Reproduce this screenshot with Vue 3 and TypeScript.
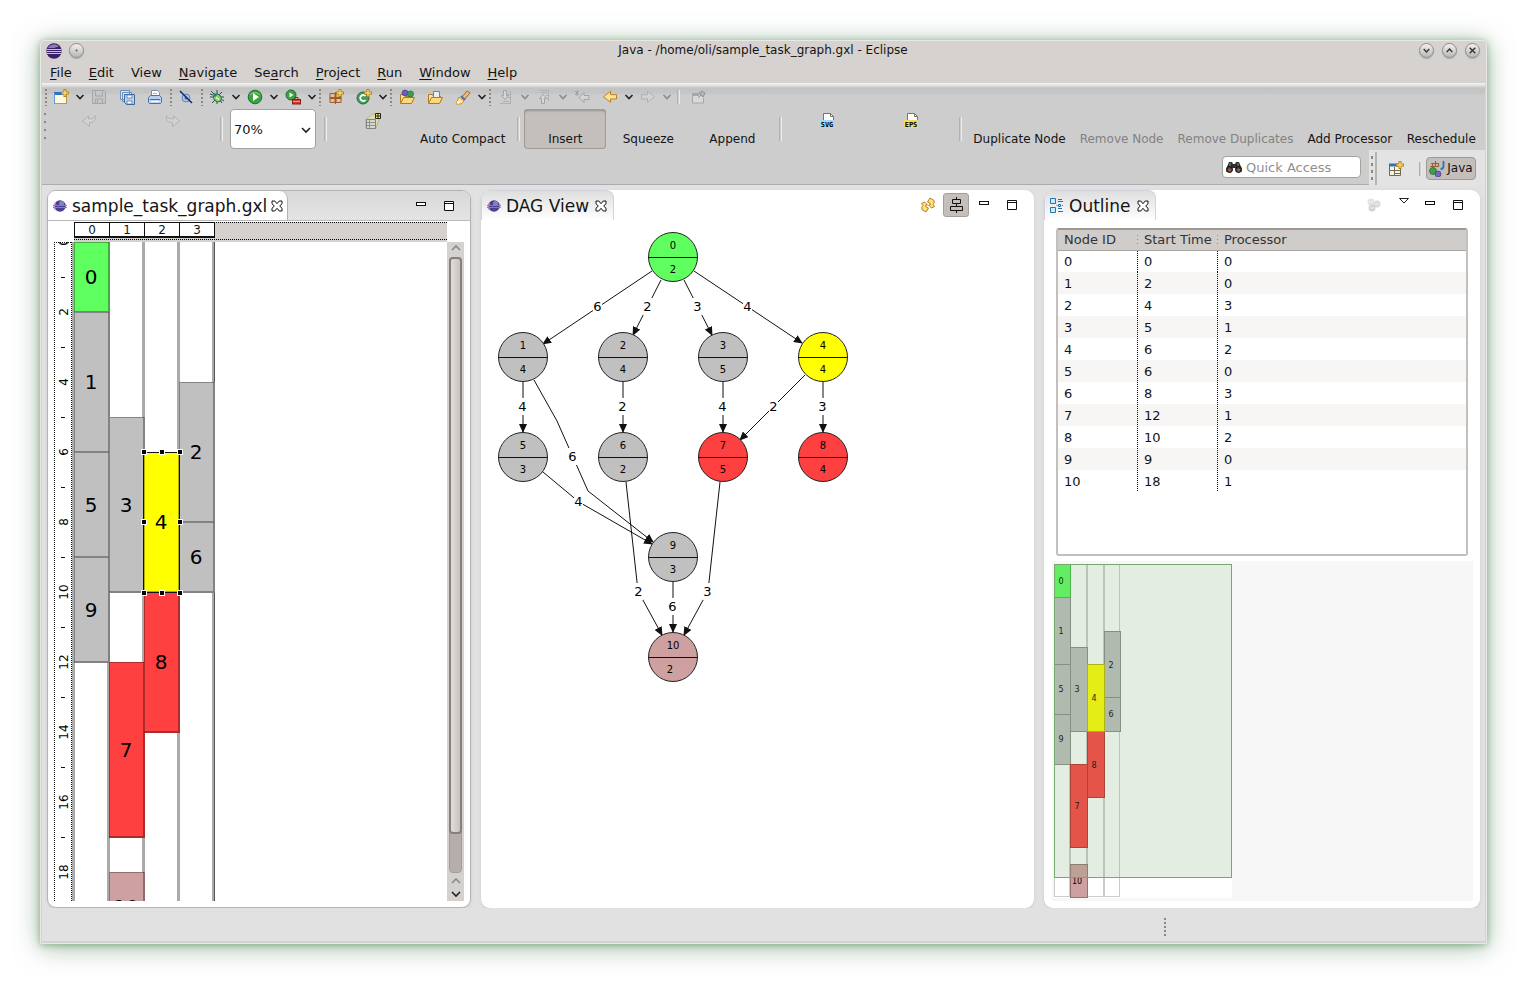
<script setup lang="ts">
import { ref } from 'vue'

interface Tool { kind: 'icon' | 'drop' | 'grip' | 'sep'; icon?: string; label?: string; wide?: boolean; off?: boolean }
interface Action { kind: 'button' | 'sep' | 'zoom'; label?: string; icon?: string; off?: boolean; on?: boolean; size?: 'snug' | 'roomy' }
interface Task { id: number; lane: number; start: number; len: number; fill: string }
interface GraphNode { id: number; x: number; y: number; w: number; fill: string }
interface Edge { points: string; x: number; y: number; cost: number }

const zoomLevel = ref('70%')
const search = ref('')
const selected = 4

const menus: [string, string, string][] = [
  ['', 'F', 'ile'], ['', 'E', 'dit'], ['View', '', ''], ['', 'N', 'avigate'], ['Se', 'a', 'rch'],
  ['', 'P', 'roject'], ['', 'R', 'un'], ['', 'W', 'indow'], ['', 'H', 'elp'],
]

const page = '<path d="M3.500 .500h7l3 3v11h-10z" fill="#fff" stroke="#77756a"/><path d="M10.500 .500v3h3" fill="none" stroke="#77756a"/>'
const spark = '<path d="M12 0v8M8 4h8" stroke="#b8860b" stroke-width="3"/><path d="M12 1v6M9 4h6" stroke="#fff3a8" stroke-width="1"/>'
const folder = '<path d="M1.500 13.500v-8h4l1 2h7v2" fill="#fbe3a0" stroke="#b07a1e"/><path d="M1.500 14.500l3-6h11l-3 6z" fill="#ffd778" stroke="#b07a1e"/>'
const icons: Record<string, string> = {
  new: '<rect x="1.500" y="3.500" width="12" height="11" fill="#fff8df" stroke="#b39a55"/><path d="M1 4.500h9" stroke="#2f73c0" stroke-width="3"/><path d="M1.500 4v10" stroke="#5f9bd4"/>' + spark,
  save: '<path d="M1.500 1.500h12l1 1v12h-13z" fill="#c6c6c6" stroke="#a6a6a6"/><path d="M4.500 2v5h7V2M4.500 14v-4h7v4M6.500 11v3" fill="none" stroke="#a6a6a6"/>',
  saveall: '<path d="M1.500 1.500h9v9h-9zM3.500 3.500h9v9h-9z" fill="#d9e6f4" stroke="#6b8fb8"/><path d="M5.500 5.500h10v10h-8l-2-2z" fill="#bcd2ea" stroke="#3d6a9e"/><path d="M8 6h5v3H8zM8 12h5v3H8z" fill="#fff" stroke="#3d6a9e" stroke-width=".7"/>',
  print: '<path d="M4.500 8V1.500h6l2 2V8" fill="#fff" stroke="#6d93c0"/><path d="M6 4.500h4M6 6.500h5" stroke="#9bb6d8"/><path d="M1.500 8.500l2-2h9l2 2v5l-1 1h-11l-1-1z" fill="#b9cfec" stroke="#4672ad"/><path d="M3 10.500h10" stroke="#4672ad"/><path d="M4 12.500h8" stroke="#fff"/>',
  skip: '<circle cx="8" cy="9" r="4" fill="#aac8e4" stroke="#5b87b3"/><circle cx="8" cy="9" r="1.500" fill="#476f9b"/><path d="M2 2l12 12" stroke="#14257c" stroke-width="1.500"/>',
  bug: '<path d="M2 2l4 4M8 1v4M13 3l-3 3M1 8h4M15 8h-4M3 14l3-3M8 15v-3M13 14l-2-3M1 5l3 1M15 12l-3-2" stroke="#27534a"/><ellipse cx="8.500" cy="9" rx="4" ry="3.500" transform="rotate(40 8.500 9)" fill="#8fce6a" stroke="#1f6a56"/><circle cx="6" cy="6" r="1.800" fill="#2b7d6c"/><path d="M7 8l3 3" stroke="#dff5b0" stroke-width="1.500"/>',
  run: '<circle cx="8" cy="8" r="6.800" fill="#3da13c" stroke="#17703a"/><path d="M3 6a6 5 0 0 1 10 0" fill="none" stroke="#96d08a"/><path d="M6 4l6 4-6 4z" fill="#fff"/>',
  ext: '<circle cx="6" cy="6" r="5" fill="#3da13c" stroke="#17703a"/><path d="M4.500 3.500l4 2.500-4 2.500z" fill="#fff"/><rect x="7.500" y="10.500" width="8" height="4.500" fill="#d23b2b" stroke="#8c1c14"/><path d="M10 10V8.500h3V10" fill="none" stroke="#8c1c14"/><path d="M8 12.500h7" stroke="#f4b5a8" stroke-width=".8"/>',
  pkg: '<path d="M2 4.500h5v4H2zM8 4.500h5v4H8zM2 9.500h5v4H2zM8 9.500h5v4H8z" fill="#e9bf95" stroke="#9a5a32"/><path d="M7.500 3v12M1 9h13" stroke="#9a5a32"/>' + spark,
  cls: '<circle cx="7" cy="9" r="6" fill="#3f9e5b" stroke="#1c7040"/><path d="M9.500 7a3 3 0 1 0 0 4" fill="none" stroke="#fff" stroke-width="1.800"/>' + spark,
  openA: folder + '<circle cx="6" cy="4" r="3" fill="#6a5fb5" stroke="#463c8e" stroke-width=".7"/><circle cx="11.500" cy="5" r="3" fill="#3e9c57" stroke="#1c7040" stroke-width=".7"/>',
  openB: folder + '<path d="M6.500 2.500h6v6h-6z" fill="#e6eefa" stroke="#5f84b5"/>',
  wand: '<path d="M7 8l5-6 3 2-5 6z" fill="#f3b577" stroke="#a5682a"/><path d="M4 8l5 4-3 3H1z" fill="#ffe89a" stroke="#c79328"/><path d="M6 7l4 4" stroke="#5a6fae" stroke-width="2"/><path d="M2 13l2 1" stroke="#fff" stroke-width="2"/>',
  nextA: '<path d="M5.500 1.500h3v5h2l-3.500 4-3.500-4h2z" fill="#d6d6d6" stroke="#a3a3a3"/><path d="M2 14.500h11M12.500 2v12M9 5.500h3M10 8.500h2M5 12.500h6" stroke="#b1b1b1"/>',
  prevA: '<path d="M5.500 14.500h3v-5h2L7 5.500l-3.500 4h2z" fill="#d6d6d6" stroke="#a3a3a3"/><path d="M4 1.500h9M12.500 2v10M5 3.500h6M10 6.500h2M11 9.500h2" stroke="#b1b1b1"/>',
  lastEdit: '<path d="M1 2l4 4M5 2L1 6M3 1v6" stroke="#9d9d9d"/><path d="M15 6.500h-5v-3l-5 5 5 5v-3h5z" fill="#d4d4d4" stroke="#a3a3a3"/>',
  back: '<path d="M14.500 5.500h-6v-4l-7 6.500 7 6.500v-4h6z" fill="#ffe29a" stroke="#b57c17" transform="translate(0 1) scale(1 .85)"/>',
  fwd: '<path d="M1.500 5.500h6v-4l7 6.500-7 6.500v-4h-6z" fill="#d2d2d2" stroke="#acacac" transform="translate(0 1) scale(1 .85)"/>',
  pin: '<path d="M2.500 4.500h7M2.500 4v10h11V9" fill="#d8d8d8" stroke="#a6a6a6"/><path d="M3 5h6v2H3z" fill="#a8a8a8"/><path d="M8 9l3-3M9 4l4 4 2-4-3-2z" fill="#b4b4b4" stroke="#929292"/>',
  undo: '<path d="M14.500 2.500c1 5-2 7-6 7v4l-7-5.500 6-5v3c4 0 6-1 7-3.500z" fill="#d2d2ce" stroke="#b3b3b0"/>',
  redo: '<path d="M1.500 2.500c-1 5 2 7 6 7v4l7-5.500-6-5v3c-4 0-6-1-7-3.500z" fill="#d2d2ce" stroke="#b3b3b0"/>',
  compact: '<path d="M1 6l7-5h8l-5 14H1z" fill="#dedeae" stroke="#a5a58d" stroke-width=".7"/><path d="M1.500 6.500h9v9h-9z" fill="#d5d5d0" stroke="#84847c"/><path d="M1 9.500h10M4.500 7v8M1 12.500h10" stroke="#84847c" stroke-width=".8"/><path d="M10.500 .500h5v5h-5z" fill="#fff15a" stroke="#222"/><path d="M10.500 3h5M13 1v4" stroke="#222"/>',
  svg: page + '<rect x="0" y="7" width="14" height="8" fill="#9fdcfa"/><text x="7" y="14" font-size="7" font-weight="700" text-anchor="middle" font-family="DejaVu Sans Mono">SVG</text>',
  eps: page + '<rect x="0" y="7" width="14" height="8" fill="#ffd65c"/><text x="7" y="14" font-size="7" font-weight="700" text-anchor="middle" font-family="DejaVu Sans Mono">EPS</text>',
  persp: '<path d="M1.500 3.500h11v11h-11z" fill="#f7f3e2" stroke="#6f6a52"/><path d="M1 4h10" stroke="#2f6fc0" stroke-width="3"/><path d="M1 9.500h12M6.500 6v9M6 12.500h7" stroke="#6f6a52"/>' + spark,
  java: '<path d="M2 2.500h8M1 5.500h9M3.500 2v5M6.500 0v6M9.500 2v4" stroke="#9c5c34" stroke-width="1.200"/><circle cx="4" cy="10" r="3.500" fill="#3f9e4b" stroke="#1c7040" stroke-width=".7"/><circle cx="9" cy="13" r="3" fill="#7467bd" stroke="#463c8e" stroke-width=".7"/><path d="M14.500 0v5q0 3-3 3" fill="none" stroke="#2b75b8" stroke-width="1.800"/>',
  binoc: '<path d="M3 3h3l1 2h2l1-2h3l2.500 6v4h-5l-1-4h-3l-1 4h-5V9z" fill="#2f2f2f"/><circle cx="3.500" cy="10.500" r="3" fill="#3b3b3b" stroke="#111"/><circle cx="12.500" cy="10.500" r="3" fill="#3b3b3b" stroke="#111"/><circle cx="3.700" cy="11" r="1.500" fill="#b5602e"/><circle cx="12.700" cy="11" r="1.500" fill="#b5602e"/><path d="M4 4v3M12 4v3" stroke="#8b8b8b"/>',
  eclipse: '<circle cx="8" cy="8" r="7.700" fill="#3b2268"/><path d="M2 5a6.500 6 0 0 1 11-1.500L8 5z" fill="#8f7ab8"/><path d="M1 6.500h14M.5 8.500h15M1 10.500h14" stroke="#c9bde2"/>',
  ball: '<circle cx="8" cy="8" r="5.800" fill="#4b3f92"/><path d="M3.500 5a6 6 0 0 0 0 7" fill="none" stroke="#c78fc8" stroke-width="1.500"/><circle cx="9.500" cy="5.500" r="2.500" fill="#8582c4"/><path d="M1 7.500h14M1 9.500h14" stroke="#6f86d8"/>',
  sync: '<path d="M1.500 6.500L4.500 5l3 3-2 .500q.5 2.500 3 2.500l-2.500 4-4-2.500Q1 10 3 8.500z" fill="#ffdf80" stroke="#b5811c"/><path d="M14.500 9.500L11.500 11l-3-3 2-.5Q10 5 7.500 5L10 1l4 2.500Q15 6 13 7.500z" fill="#ffdf80" stroke="#b5811c"/>',
  align: '<path d="M8.500 0v3M8.500 6v4M8.500 13v3" stroke="#111"/><path d="M4.500 2.500h8v4h-8zM2.500 9.500h12v4h-12z" fill="none" stroke="#111"/>',
  outline: '<path d="M1.500 .500h5v5h-5zM1.500 9.500h5v5h-5z" fill="#cfe9fa" stroke="#1d75b3"/><path d="M9 1.500h4M9 3.500h5M9 10.500h4M9 13.500h5M7.500 7.500h1M13 7.500h1" stroke="#1d75b3"/><path d="M9.500 6.500h2v2h-2z" fill="#cfe9fa" stroke="#1d75b3"/>',
  group: '<circle cx="5" cy="5" r="3.500" fill="#e2e2e2"/><circle cx="11" cy="7" r="3.500" fill="#dadada"/><circle cx="6" cy="11" r="3.500" fill="#d2d2d2"/><path d="M3 5h4M9 7h4M4 11h4" stroke="#f2f2f2"/>',
  close: '<path d="M3 3h2.800L8 5.700 10.200 3H13v2.800L10.700 8 13 10.200V13h-2.800L8 10.300 5.800 13H3v-2.800L5.300 8 3 5.800z" fill="#fff" stroke="#111"/>',
  min: '<rect x="3.500" y="4.500" width="9" height="3" fill="#fff" stroke="#111"/>',
  max: '<path d="M3.500 3.500h9v9h-9zM3 5.500h10" fill="#fff" stroke="#111"/>',
  view: '<path d="M3.500 1.500h9L8 6z" fill="#fff" stroke="#222"/>',
}

const tools: Tool[] = [
  { kind: 'grip' },
  { kind: 'icon', icon: 'new', label: 'New' }, { kind: 'drop' },
  { kind: 'icon', icon: 'save', label: 'Save', off: true },
  { kind: 'icon', icon: 'saveall', label: 'Save All' },
  { kind: 'icon', icon: 'print', label: 'Print' },
  { kind: 'grip' },
  { kind: 'icon', icon: 'skip', label: 'Skip Breakpoints' },
  { kind: 'grip' },
  { kind: 'icon', icon: 'bug', label: 'Debug' }, { kind: 'drop' },
  { kind: 'icon', icon: 'run', label: 'Run' }, { kind: 'drop' },
  { kind: 'icon', icon: 'ext', label: 'External Tools' }, { kind: 'drop' },
  { kind: 'grip', wide: true },
  { kind: 'icon', icon: 'pkg', label: 'New Package' },
  { kind: 'icon', icon: 'cls', label: 'New Class' }, { kind: 'drop' },
  { kind: 'grip', wide: true },
  { kind: 'icon', icon: 'openA', label: 'Open Type' },
  { kind: 'icon', icon: 'openB', label: 'Open Task' },
  { kind: 'icon', icon: 'wand', label: 'Search' }, { kind: 'drop' },
  { kind: 'grip', wide: true },
  { kind: 'icon', icon: 'nextA', label: 'Next Annotation', off: true }, { kind: 'drop', off: true },
  { kind: 'icon', icon: 'prevA', label: 'Previous Annotation', off: true }, { kind: 'drop', off: true },
  { kind: 'icon', icon: 'lastEdit', label: 'Last Edit Location', off: true },
  { kind: 'icon', icon: 'back', label: 'Back' }, { kind: 'drop' },
  { kind: 'icon', icon: 'fwd', label: 'Forward', off: true }, { kind: 'drop', off: true },
  { kind: 'sep' },
  { kind: 'icon', icon: 'pin', label: 'Pin Editor', off: true },
]

const actions: Action[] = [
  { kind: 'button', icon: 'undo', off: true }, { kind: 'button', icon: 'redo', off: true },
  { kind: 'sep' }, { kind: 'zoom' }, { kind: 'sep' },
  { kind: 'button', icon: 'compact' }, { kind: 'button', label: 'Auto Compact', size: 'snug' },
  { kind: 'sep' },
  { kind: 'button', label: 'Insert', on: true }, { kind: 'button', label: 'Squeeze' }, { kind: 'button', label: 'Append' },
  { kind: 'sep' },
  { kind: 'button', icon: 'svg' }, { kind: 'button', icon: 'eps' },
  { kind: 'sep' },
  { kind: 'button', label: 'Duplicate Node', size: 'roomy' },
  { kind: 'button', label: 'Remove Node', off: true, size: 'roomy' },
  { kind: 'button', label: 'Remove Duplicates', off: true, size: 'roomy' },
  { kind: 'button', label: 'Add Processor', size: 'roomy' },
  { kind: 'button', label: 'Reschedule', size: 'roomy' },
]

const gray = '#c0c0c0', green = '#60ff60', yellow = '#ffff00', red = '#ff4040', rose = '#cfa0a0'

const tasks: Task[] = [
  { id: 0, lane: 0, start: 0, len: 2, fill: green },
  { id: 1, lane: 0, start: 2, len: 4, fill: gray },
  { id: 5, lane: 0, start: 6, len: 3, fill: gray },
  { id: 9, lane: 0, start: 9, len: 3, fill: gray },
  { id: 3, lane: 1, start: 5, len: 5, fill: gray },
  { id: 7, lane: 1, start: 12, len: 5, fill: red },
  { id: 10, lane: 1, start: 18, len: 2, fill: rose },
  { id: 8, lane: 2, start: 10, len: 4, fill: red },
  { id: 2, lane: 3, start: 4, len: 4, fill: gray },
  { id: 6, lane: 3, start: 8, len: 2, fill: gray },
  { id: 4, lane: 2, start: 6, len: 4, fill: yellow },
]
const laneW = 35
const unit = 35
const sel = tasks.find(t => t.id === selected)!
const handles = [0, 18, 36].flatMap(x => [0, 70, 141].map(y => [x, y])).filter(([x, y]) => x !== 18 || y !== 70)

const nodes: GraphNode[] = [
  { id: 0, x: 192, y: 37, w: 2, fill: green },
  { id: 1, x: 42, y: 137, w: 4, fill: gray },
  { id: 2, x: 142, y: 137, w: 4, fill: gray },
  { id: 3, x: 242, y: 137, w: 5, fill: gray },
  { id: 4, x: 342, y: 137, w: 4, fill: yellow },
  { id: 5, x: 42, y: 237, w: 3, fill: gray },
  { id: 6, x: 142, y: 237, w: 2, fill: gray },
  { id: 7, x: 242, y: 237, w: 5, fill: red },
  { id: 8, x: 342, y: 237, w: 4, fill: red },
  { id: 9, x: 192, y: 337, w: 3, fill: gray },
  { id: 10, x: 192, y: 437, w: 2, fill: rose },
]
const edges: Edge[] = [
  { points: '171,51 62,124', x: 116, y: 86, cost: 6 },
  { points: '180,60 152,115', x: 166, y: 86, cost: 2 },
  { points: '203,60 231,115', x: 216, y: 86, cost: 3 },
  { points: '213,51 321,123', x: 266, y: 86, cost: 4 },
  { points: '42,162 42,212', x: 41, y: 186, cost: 4 },
  { points: '53,160 76,201 107,271 172,322', x: 91, y: 236, cost: 6 },
  { points: '142,162 142,212', x: 141, y: 186, cost: 2 },
  { points: '242,162 242,212', x: 241, y: 186, cost: 4 },
  { points: '324,155 259,220', x: 292, y: 186, cost: 2 },
  { points: '342,162 342,212', x: 341, y: 186, cost: 3 },
  { points: '62,252 98,282 171,324', x: 97, y: 281, cost: 4 },
  { points: '145,262 157,371 181,415', x: 157, y: 371, cost: 2 },
  { points: '239,262 227,371 203,415', x: 226, y: 371, cost: 3 },
  { points: '192,362 192,412', x: 191, y: 386, cost: 6 },
]

const schedule = [
  [0, 0, 0], [1, 2, 0], [2, 4, 3], [3, 5, 1], [4, 6, 2], [5, 6, 0],
  [6, 8, 3], [7, 12, 1], [8, 10, 2], [9, 9, 0], [10, 18, 1],
]

const miniX = [0, 16, 33, 50, 66]
const miniY = (t: number) => Math.round(t * 16.65)
</script>

<template>
  <main class="desktop">
    <div class="window">
      <header class="titlebar">
        <div class="title-side">
          <svg class="ico" viewBox="0 0 16 16" v-html="icons.eclipse" />
          <button class="round" aria-label="Window menu"><svg viewBox="0 0 16 16"><circle cx="8" cy="8" r="1" fill="#555" /></svg></button>
        </div>
        <h1>Java - /home/oli/sample_task_graph.gxl - Eclipse</h1>
        <div class="title-side end">
          <button class="round" aria-label="Minimize window"><svg viewBox="0 0 16 16"><path d="M5 6.500l3 3 3-3" /></svg></button>
          <button class="round" aria-label="Maximize window"><svg viewBox="0 0 16 16"><path d="M5 9.500l3-3 3 3" /></svg></button>
          <button class="round" aria-label="Close window"><svg viewBox="0 0 16 16"><path d="M5 5l6 6M11 5l-6 6" /></svg></button>
        </div>
      </header>

      <nav class="menubar" aria-label="Main menu">
        <button v-for="m in menus" :key="m.join('')">{{ m[0] }}<u>{{ m[1] }}</u>{{ m[2] }}</button>
      </nav>

      <section class="toolbars">
        <div class="tools">
          <template v-for="(t, i) in tools" :key="i">
            <i v-if="t.kind === 'grip'" class="grip" :class="{ wide: t.wide }" />
            <i v-else-if="t.kind === 'sep'" class="sep" />
            <button v-else-if="t.kind === 'drop'" class="drop" :class="{ off: t.off }" aria-label="More">
              <svg viewBox="0 0 10 10"><path d="M1.500 3L5 6.500 8.500 3" /></svg>
            </button>
            <button v-else class="tool" :aria-label="t.label" :disabled="t.off">
              <svg class="ico" viewBox="0 0 16 16" v-html="icons[t.icon!]" />
            </button>
          </template>
        </div>

        <div class="actions">
          <i class="grip" />
          <template v-for="(a, i) in actions" :key="i">
            <i v-if="a.kind === 'sep'" class="sep" />
            <span v-else-if="a.kind === 'zoom'" class="zoom">
              <select v-model="zoomLevel" aria-label="Zoom">
                <option>50%</option><option>70%</option><option>100%</option>
              </select>
              <svg class="chev" viewBox="0 0 10 10"><path d="M1 3l4 4 4-4" /></svg>
            </span>
            <button v-else class="action" :class="[a.size, { on: a.on }]" :disabled="a.off" :aria-label="a.label || a.icon">
              <span class="slot"><svg v-if="a.icon" class="ico" viewBox="0 0 16 16" v-html="icons[a.icon]" /></span>
              <span class="label">{{ a.label }}</span>
            </button>
          </template>
        </div>

        <div class="access">
          <div class="access-main">
            <label class="quick">
              <svg class="ico" viewBox="0 0 16 16" v-html="icons.binoc" />
              <input v-model="search" type="text" placeholder="Quick Access" aria-label="Quick Access">
            </label>
          </div>
          <div class="perspectives">
            <i class="grip" />
            <i class="edge" />
            <button class="open-persp" aria-label="Open Perspective"><svg class="ico" viewBox="0 0 16 16" v-html="icons.persp" /></button>
            <i class="sep" />
            <button class="persp"><svg class="ico" viewBox="0 0 16 16" v-html="icons.java" />Java</button>
          </div>
        </div>
      </section>

      <section class="workbench">
        <article class="panel editor">
          <header class="head">
            <div class="tab">
              <svg class="ico" viewBox="0 0 16 16" v-html="icons.ball" />
              <h2>sample_task_graph.gxl</h2>
              <button aria-label="Close editor"><svg class="ico" viewBox="0 0 16 16" v-html="icons.close" /></button>
            </div>
            <div class="head-tools">
              <button aria-label="Minimize editor"><svg class="ico" viewBox="0 0 16 16" v-html="icons.min" /></button>
              <button aria-label="Maximize editor"><svg class="ico" viewBox="0 0 16 16" v-html="icons.max" /></button>
            </div>
          </header>
          <div class="gantt">
            <div class="lane-ruler">
              <span v-for="n in 4" :key="n">{{ n - 1 }}</span>
            </div>
            <svg class="time-ruler">
              <path d="M0.500 0V2000M17.500 0V2000" class="dots" />
              <path d="M0 .500H18" class="dots" />
              <g v-for="n in 10" :key="n">
                <text :transform="`translate(14 ${(n - 1) * 70}) rotate(-90)`">{{ (n - 1) * 2 }}</text>
                <path :d="`M7 ${n * 70 - 34.5}h4`" stroke="#111" />
              </g>
            </svg>
            <svg class="lanes">
              <line v-for="n in 5" :key="n" :x1="(n - 1) * laneW + 1.5" :x2="(n - 1) * laneW + 1.5" y1="0" y2="100%" stroke="#aaa" stroke-width="3" />
              <line x1="142.500" x2="142.500" y1="0" y2="100%" stroke="#555" />
              <g v-for="t in tasks" :key="t.id" :transform="`translate(${t.lane * laneW + 2} ${t.start * unit})`">
                <rect :width="laneW + 1" :height="t.len * unit + 1" :fill="t.fill" />
                <path :d="`M0 .5H${laneW}M.5 0V${t.len * unit}`" stroke="#000" opacity=".3" />
                <path :d="`M${laneW} 0V${t.len * unit}H0`" fill="none" stroke="#000" stroke-width="2" opacity=".32" />
                <text x="17" :y="t.len * unit / 2 + 7">{{ t.id }}</text>
              </g>
              <g :transform="`translate(${sel.lane * laneW + 1} ${sel.start * unit - 1})`">
                <rect x=".500" y="1.500" width="36" height="140" fill="none" stroke="#111" />
                <rect v-for="h in handles" :key="h.join()" :x="h[0] - 1.5" :y="h[1] - 1.5" width="5" height="5" fill="#000" stroke="#fff" />
              </g>
            </svg>
            <div class="scroll" aria-hidden="true">
              <svg class="arrow dim" viewBox="0 0 10 10"><path d="M1 7l4-4 4 4" /></svg>
              <div class="track"><div class="thumb" /></div>
              <svg class="arrow dim" viewBox="0 0 10 10"><path d="M1 7l4-4 4 4" /></svg>
              <svg class="arrow" viewBox="0 0 10 10"><path d="M1 3l4 4 4-4" /></svg>
            </div>
          </div>
        </article>

        <article class="panel">
          <header class="head">
            <div class="tab view">
              <svg class="ico" viewBox="0 0 16 16" v-html="icons.ball" />
              <h2>DAG View</h2>
              <button aria-label="Close DAG View"><svg class="ico" viewBox="0 0 16 16" v-html="icons.close" /></button>
            </div>
            <div class="head-tools">
              <button aria-label="Refresh"><svg class="ico" viewBox="0 0 16 16" v-html="icons.sync" /></button>
              <button class="pressed" aria-label="Layout"><svg class="ico" viewBox="0 0 16 16" v-html="icons.align" /></button>
              <button aria-label="Minimize view"><svg class="ico" viewBox="0 0 16 16" v-html="icons.min" /></button>
              <button aria-label="Maximize view"><svg class="ico" viewBox="0 0 16 16" v-html="icons.max" /></button>
            </div>
          </header>
          <svg class="dag">
            <defs>
              <marker id="arrowhead" markerWidth="10" markerHeight="8" refX="8" refY="4" orient="auto" markerUnits="userSpaceOnUse">
                <path d="M0 0L9 4 0 8z" fill="#111" />
              </marker>
            </defs>
            <g v-for="(e, i) in edges" :key="i">
              <polyline :points="e.points" fill="none" stroke="#111" marker-end="url(#arrowhead)" />
            </g>
            <g v-for="(e, i) in edges" :key="i" class="cost">
              <rect :x="e.x - 4" :y="e.y - 8" width="9" height="17" fill="#fff" />
              <text :x="e.x + 0.5" :y="e.y + 5">{{ e.cost }}</text>
            </g>
            <g v-for="n in nodes" :key="n.id" :transform="`translate(${n.x} ${n.y})`" class="node">
              <circle r="24.500" :fill="n.fill" stroke="#222" />
              <path d="M-24 .500H24" stroke="#111" />
              <text y="-8">{{ n.id }}</text>
              <text :x="n.id > 9 ? -3 : 0" y="16">{{ n.w }}</text>
            </g>
          </svg>
        </article>

        <article class="panel">
          <header class="head">
            <div class="tab view">
              <svg class="ico" viewBox="0 0 16 16" v-html="icons.outline" />
              <h2>Outline</h2>
              <button aria-label="Close Outline"><svg class="ico" viewBox="0 0 16 16" v-html="icons.close" /></button>
            </div>
            <div class="head-tools">
              <button aria-label="Group" disabled><svg class="ico" viewBox="0 0 16 16" v-html="icons.group" /></button>
              <button class="view-menu" aria-label="View menu"><svg class="ico" viewBox="0 0 16 16" v-html="icons.view" /></button>
              <button aria-label="Minimize outline"><svg class="ico" viewBox="0 0 16 16" v-html="icons.min" /></button>
              <button aria-label="Maximize outline"><svg class="ico" viewBox="0 0 16 16" v-html="icons.max" /></button>
            </div>
          </header>
          <div class="table-box">
            <table>
              <thead>
                <tr><th scope="col">Node ID</th><th scope="col">Start Time</th><th scope="col">Processor</th></tr>
              </thead>
              <tbody>
                <tr v-for="r in schedule" :key="r[0]"><td v-for="(c, i) in r" :key="i">{{ c }}</td></tr>
              </tbody>
            </table>
          </div>
          <div class="overview">
            <svg>
              <rect x="2" y="3" width="178" height="334" fill="#fff" />
              <g transform="translate(2 3)">
                <g fill="none" stroke="#000" stroke-opacity=".2">
                  <rect v-for="n in 4" :key="n" :x="miniX[n - 1] + 0.5" y=".500" :width="miniX[n] - miniX[n - 1] - 1" height="332" />
                </g>
                <g v-for="t in tasks" :key="t.id" :transform="`translate(${miniX[t.lane]} ${miniY(t.start)})`">
                  <rect :width="miniX[t.lane + 1] - miniX[t.lane] + 1" :height="miniY(t.start + t.len) - miniY(t.start) + 1" :fill="t.fill" />
                  <rect x=".500" y=".500" :width="miniX[t.lane + 1] - miniX[t.lane]" :height="miniY(t.start + t.len) - miniY(t.start)" fill="none" stroke="#000" stroke-opacity=".28" />
                  <text x="7" :y="miniY(t.len) / 2 + 3">{{ t.id }}</text>
                </g>
                <rect x=".500" y=".500" width="177" height="313" fill="#78a56e" fill-opacity=".2" stroke="#78a96c" />
              </g>
            </svg>
          </div>
        </article>
      </section>

      <footer class="status"><i class="grip tall" /></footer>
    </div>
  </main>
</template>

<style>
body { background: #fff; }
</style>

<style scoped>
* { box-sizing: border-box; }
.desktop { min-height: 100vh; padding: 40px; display: flex; font: 12px/15px "DejaVu Sans", sans-serif; color: #141414; }
.window {
  flex: 1; min-width: 0; display: flex; flex-direction: column; padding: 0 2px 3px; background: #d6d2cf;
  border-radius: 5px 5px 2px 2px;
  box-shadow: inset 0 0 0 1px #e9e8e4, 0 1px 7px rgba(60, 130, 60, .5), 0 3px 26px rgba(70, 120, 80, .5);
}
button { border: 0; padding: 0; margin: 0; background: none; font: inherit; color: inherit; display: flex; align-items: center; justify-content: center; }
h1, h2 { margin: 0; font-weight: 400; }
.ico { width: 16px; height: 16px; flex: none; display: block; }

.titlebar { display: grid; grid-template-columns: 1fr auto 1fr; align-items: center; height: 21px; padding: 0 5px 0 4px; }
h1 { font-size: 12px; line-height: 15px; }
.title-side { display: flex; align-items: center; gap: 7px; }
.title-side.end { justify-content: flex-end; gap: 8px; }
.round { width: 15px; height: 15px; border-radius: 50%; background: linear-gradient(#f2f1f0, #b9b7b4); border: 1px solid #8f8d8a; box-shadow: 0 1px 1px #aaa; }
.round svg { width: 15px; height: 15px; flex: none; }
.round path { fill: none; stroke: #333; stroke-width: 1.5; }
.menubar { display: flex; height: 22px; align-items: center; font-size: 13px; }
.menubar button { padding: 0 9px 0 8px; display: block; }
.menubar u { text-underline-offset: 2px; }

.toolbars { background: linear-gradient(#f4f4f4, #dcdcdc 3px, #c3c3c3 5px, #c5c5c5 10px, #cdcdcd 12px); padding-top: 5px; }
.tools { display: flex; align-items: center; height: 18px; padding-left: 2px; }
.tool { width: 28px; height: 18px; flex: none; }
.grip { width: 3px; height: 17px; flex: none; background: repeating-linear-gradient(#8f8a78 0 2px, transparent 2px 4px) center / 2px 100% no-repeat; }
.grip.wide { width: 5px; }
.grip.tall { height: 18px; }
.sep { width: 12px; height: 14px; flex: none; background: linear-gradient(90deg, #b4b0ae 1px, #cdcdcd 1px 2px, #ececec 2px 3px) center / 3px 100% no-repeat; }
.drop { width: 10px; height: 18px; flex: none; }
.drop svg { width: 10px; height: 10px; }
.drop path, .chev path, .arrow path { fill: none; stroke: #222; stroke-width: 1.6; }
.drop.off path, .dim path { stroke: #8a8a8a; }

.actions { display: flex; height: 44px; padding: 3px 0 1px 1px; }
.actions > .grip { height: 32px; margin-right: 1px; align-self: center; background-image: repeating-linear-gradient(#8f8a78 0 2px, transparent 2px 8px); }
.actions > .sep { height: 24px; align-self: center; }
.action { min-width: 84px; padding: 0 6px; flex: none; display: grid; grid-template-rows: 24px 12px; align-content: start; justify-items: center; align-items: center; }
.action.snug { padding: 0 7px 0 5px; }
.action.roomy { padding: 0 7px; }
.action.on { min-width: 82px; background: #c5bfbb; border-radius: 4px; box-shadow: inset 0 0 0 1px #a19c98, inset 0 2px 2px #96918d; }
.action:disabled { color: #828282; }
.slot { height: 16px; }
.label { line-height: 12px; height: 12px; white-space: nowrap; }
.zoom { position: relative; width: 92px; padding: 0 3px; display: flex; flex: none; }
.zoom select { appearance: none; flex: 1; border: 1px solid #a5a19e; border-radius: 4px; background: #fff; font: 13px/15px "DejaVu Sans", sans-serif; padding: 0 0 0 3px; color: #141414; }
.chev { position: absolute; right: 8px; top: 16px; width: 10px; height: 10px; }

.access { display: flex; height: 35px; background: #e3e3e3; }
.access-main { flex: 1; background: #cdcdcd; border-bottom: 1px solid #acacac; padding: 6px 8px 6px; display: flex; justify-content: flex-end; }
.quick { width: 139px; display: flex; align-items: center; gap: 4px; padding: 0 3px; background: #fff; border: 1px solid #a5a19e; border-radius: 4px; }
.quick input { width: 100%; min-width: 0; border: 0; padding: 0; outline: 0; background: none; font: 13px/15px "DejaVu Sans", sans-serif; }
.quick input::placeholder { color: #8f8f8f; opacity: 1; }
.perspectives { width: 116px; display: flex; align-items: center; padding: 2px 9px 0 1px; }
.perspectives .grip { height: 26px; background-image: repeating-linear-gradient(#8f8a78 0 3px, transparent 3px 7px); }
.edge { width: 4px; height: 33px; border-right: 2px solid #b5b5b5; }
.open-persp { width: 37px; height: 22px; }
.persp { flex: 1; height: 23px; gap: 2px; font-size: 12px; background: #c5bfbb; border: 1px solid #a09a96; border-radius: 4px; }

.workbench { flex: 1; min-height: 0; display: grid; grid-template-columns: 424fr 553fr 436fr; gap: 10px; padding: 5px 5px 0; background: #e1e1e1; }
.panel { min-width: 0; min-height: 0; display: flex; flex-direction: column; background: #fff; border-radius: 9px; box-shadow: 0 1px 3px #ccc; overflow: hidden; }
.editor { border: 1px solid #b4b4b4; }
.head { display: flex; height: 30px; flex: none; justify-content: space-between; }
.editor .head { background: linear-gradient(#d8d8d8, #e4e4e4); border-bottom: 1px solid #b8b8b8; }
.tab { display: flex; align-items: center; gap: 4px; padding: 0 4px; background: #fff; border-right: 1px solid #b4b4b4; border-radius: 0 8px 0 0; }
.editor .tab { padding-right: 2px; }
.editor .tab button { margin-left: -2px; }
.tab.view { background: linear-gradient(#dedede, #fff); border: 1px solid #d3d3de; border-bottom: 0; border-radius: 8px 8px 0 0; }
h2 { font-size: 17px; line-height: 20px; white-space: nowrap; }
.head-tools { display: flex; align-items: center; padding-right: 8px; }
.head-tools button { width: 28px; height: 24px; }
.head-tools .view-menu { width: 25px; margin-left: 3px; }
.editor .head-tools { padding-right: 7px; }
.head-tools .pressed { width: 26px; margin: 0 1px; background: #c5bfbb; border: 1px solid #a59f9b; border-radius: 3px; }

.gantt { flex: 1; min-height: 0; display: grid; grid-template-columns: 18px 1fr 17px; grid-template-rows: 20px 1fr; padding: 1px 6px 6px; }
.lane-ruler { grid-column: 1 / 3; margin-left: 20px; display: flex; background: #d5d1ce; border-top: 1px dotted #000; position: relative; }
.lane-ruler::after { content: ""; position: absolute; left: 0; right: 0; bottom: 2px; border-bottom: 1px dotted #000; }
.lane-ruler span { width: 35px; height: 16px; background: #fff; border: 1px solid #111; border-width: 1px 1px 2px 0; text-align: center; line-height: 14px; font-size: 12px; margin-top: -1px; }
.lane-ruler span:first-child { width: 36px; border-left-width: 1px; }
.time-ruler { grid-column: 1; width: 100%; height: 100%; min-height: 0; font-size: 12px; text-anchor: middle; }
.dots { stroke: #111; stroke-dasharray: 1 1; fill: none; }
.lanes { width: 100%; height: 100%; min-height: 0; font-size: 20px; text-anchor: middle; }
.scroll { display: flex; flex-direction: column; align-items: center; gap: 4px; padding: 2px 0; background: #d5d1ce; }
.arrow { width: 10px; height: 10px; flex: none; margin-top: -1px; }
.track { flex: 1; width: 13px; background: #b5aeaa; border-radius: 4px; border: 1px solid #a39c98; }
.thumb { height: 94%; margin: -1px; border: 2px solid #85807c; border-radius: 4px; background: linear-gradient(90deg, #e0ddda, #c6c3c0); }

.dag { flex: 1; width: 100%; min-height: 0; text-anchor: middle; }
.cost { font-size: 13px; }
.node { font-size: 10px; }

.table-box { flex: none; height: 328px; margin: 8px 12px 0; border: 2px solid #c3bfbc; border-top-color: #9c9793; border-radius: 3px; }
table { width: 100%; border-collapse: collapse; table-layout: fixed; font-size: 13px; line-height: 15px; }
th { height: 20px; padding: 0 0 0 6px; font-weight: 400; text-align: left; background: #d0ccc9; border-bottom: 1px solid #a9a5a2; white-space: nowrap; overflow: hidden; color: #333; }
th:not(:last-child) { background: repeating-linear-gradient(#8f8a86 0 1px, transparent 1px 4px) right 5px / 1px 9px no-repeat #d0ccc9; }
td { height: 22px; padding: 0 0 0 6px; }
th:nth-child(-n+2) { width: 80px; }
td:nth-child(-n+2) { background: repeating-linear-gradient(#111 0 1px, transparent 1px 2px) right / 1px 100% no-repeat; }
tbody tr:nth-child(even) { background: #f7f6f5; }
.overview { flex: 1; min-height: 0; display: flex; margin: 5px 7px 7px 8px; background: #f7f7f7; }
.overview svg { flex: 1; min-height: 0; font-size: 8px; text-anchor: middle; }

.status { height: 33px; flex: none; display: flex; justify-content: flex-end; padding: 10px 319px 0 0; background: #e1e1e1; }
</style>
